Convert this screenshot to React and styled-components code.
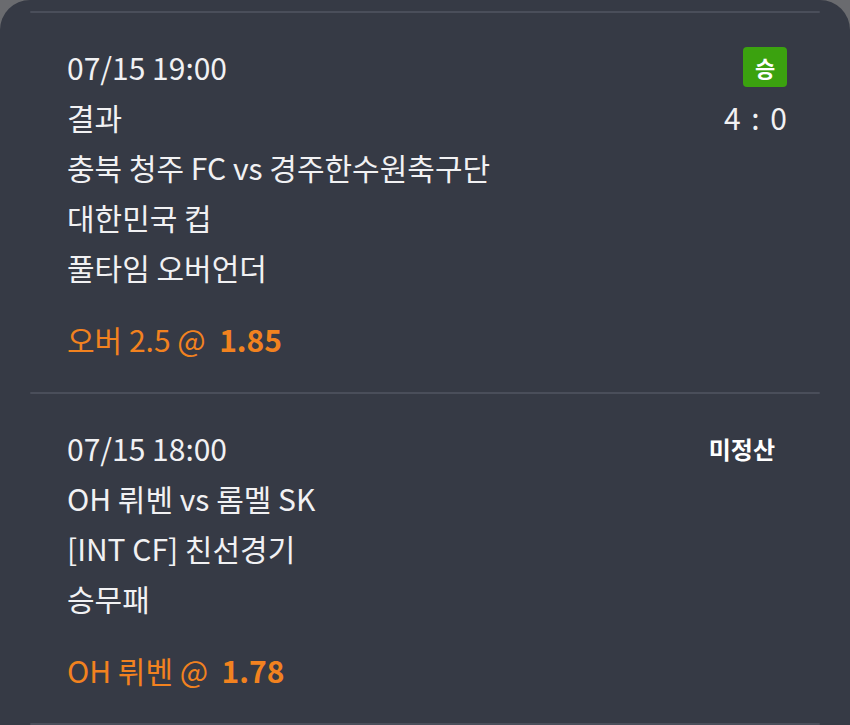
import React from "react";
import styled, { createGlobalStyle } from "styled-components";

const GlobalStyle = createGlobalStyle`
  html, body {
    margin: 0;
    padding: 0;
    background: #6a6b6f;
  }
  body {
    font-family: "Noto Sans CJK KR", "Noto Sans", sans-serif;
  }
`;

const bets = [
  {
    id: 1,
    time: "07/15 19:00",
    status: "승",
    score: "4 : 0",
    lines: ["결과", "충북 청주 FC vs 경주한수원축구단", "대한민국 컵", "풀타임 오버언더"],
    pick: "오버 2.5 @",
    odds: "1.85",
  },
  {
    id: 2,
    time: "07/15 18:00",
    pending: "미정산",
    lines: ["OH 뤼벤 vs 롬멜 SK", "[INT CF] 친선경기", "승무패"],
    pick: "OH 뤼벤 @",
    odds: "1.78",
  },
];

const Card = styled.div`
  width: 850px;
  height: 725px;
  background: #363a45;
  border-radius: 30px 30px 0 0;
  padding-top: 11px;
  box-sizing: border-box;
  overflow: hidden;
`;

const Divider = styled.div`
  height: 2px;
  margin: 0 30px;
  background: #4a4e5a;
  border-radius: 1px;
`;

const Bet = styled.section`
  padding: 29px 64px 28px 67px;
`;

const Row = styled.div`
  display: flex;
  align-items: center;
  justify-content: space-between;
  height: 50px;
  font-size: 30px;
  color: #f1f1f3;
`;

const Badge = styled.span`
  display: inline-flex;
  align-items: center;
  justify-content: center;
  width: 44px;
  height: 40px;
  margin-right: -1px;
  border-radius: 4px;
  background: #3ba20f;
  color: #ffffff;
  font-size: 22px;
  font-weight: 700;
`;

const Score = styled.span`
  letter-spacing: 2px;
  margin-right: -3px;
`;

const Pending = styled.span`
  font-size: 24px;
  font-weight: 700;
  margin-right: 11px;
  color: #ffffff;
`;

const Pick = styled.div`
  margin-top: 22px;
  height: 50px;
  display: flex;
  align-items: center;
  font-size: 30px;
  color: #f2821f;
  white-space: pre;
`;

const Odds = styled.b`
  font-weight: 700;
`;

const BetItem = ({ bet }) => {
  const [first, ...rest] = bet.lines;
  return (
    <Bet>
      <Row>
        <span>{bet.time}</span>
        {bet.status && <Badge>{bet.status}</Badge>}
        {bet.pending && <Pending>{bet.pending}</Pending>}
      </Row>
      <Row>
        <span>{first}</span>
        {bet.score && <Score>{bet.score}</Score>}
      </Row>
      {rest.map((line) => (
        <Row key={line}>
          <span>{line}</span>
        </Row>
      ))}
      <Pick>
        {bet.pick}  <Odds>{bet.odds}</Odds>
      </Pick>
    </Bet>
  );
};

export default function App() {
  return (
    <>
      <GlobalStyle />
      <Card>
        <Divider />
        {bets.map((bet) => (
          <React.Fragment key={bet.id}>
            <BetItem bet={bet} />
            <Divider />
          </React.Fragment>
        ))}
      </Card>
    </>
  );
}
